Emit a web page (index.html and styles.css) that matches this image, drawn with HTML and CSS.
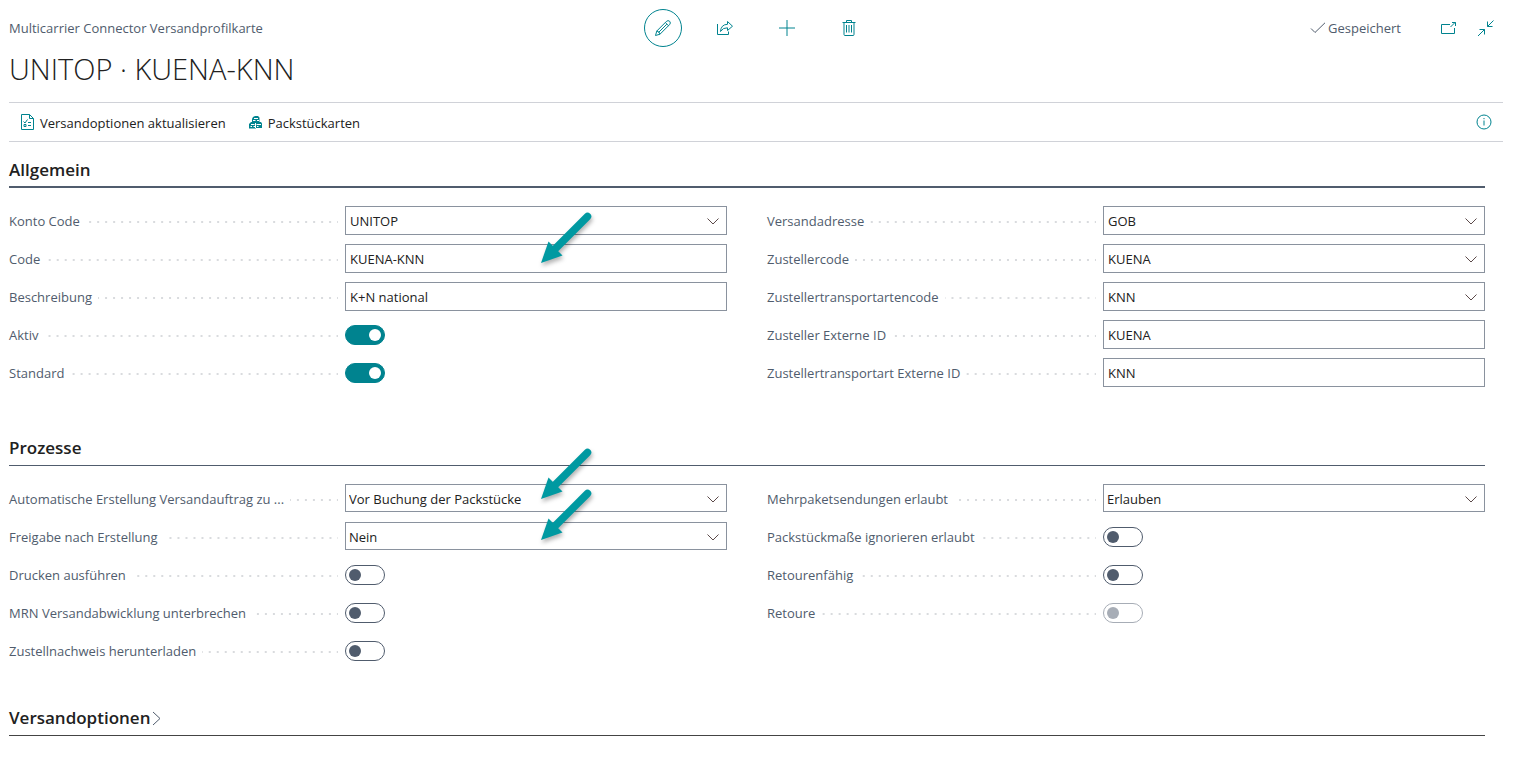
FILE: index.html
```html
<!DOCTYPE html>
<html lang="de">
<head>
<meta charset="utf-8">
<title>Multicarrier Connector Versandprofilkarte</title>
<link rel="stylesheet" href="styles.css">
</head>
<body>
<svg class="sprite" aria-hidden="true">
  <symbol id="chevron" viewBox="0 0 12 7"><path d="M.5 .5 6 6 11.500 .5" fill="none" stroke="currentColor"/></symbol>
  <symbol id="arrow" viewBox="0 0 60 60">
    <path d="M17 43 51.500 8.500" fill="none" stroke="currentColor" stroke-width="7.500" stroke-linecap="round"/>
    <path d="M5 55 12.500 33.500 26.500 47.500Z" fill="currentColor"/>
  </symbol>
</svg>
<div class="page">
  <header class="top">
    <p class="caption">Multicarrier Connector Versandprofilkarte</p>
    <div class="tools">
      <button class="tool tool-round" type="button" aria-label="Bearbeiten">
        <svg width="18" height="18" viewBox="0 0 18 18"><path d="M1.500 16.500 2.800 12 12.300 2.500Q14 .8 15.700 2.300 17.200 4 15.500 5.700L6 15.200ZM2.800 12Q5.500 12.500 6 15.200M11.300 3.500 14.500 6.700M4.500 13.500 12.800 5.200"/></svg>
      </button>
      <button class="tool" type="button" aria-label="Teilen">
        <svg width="18" height="16" viewBox="0 0 18 16"><path d="M1.500 4V14.500H12.500V11.500M4.500 11.500Q5 4.500 11.500 4.300V1.500L16.500 6.200 11.500 10.500V7.800Q7 7.500 4.500 11.500Z"/></svg>
      </button>
      <button class="tool" type="button" aria-label="Neu">
        <svg width="16" height="16" viewBox="0 0 16 16"><path d="M8 0V16M0 8H16"/></svg>
      </button>
      <button class="tool" type="button" aria-label="Löschen">
        <svg width="14" height="18" viewBox="0 0 14 18"><path d="M.5 3.500H13.500M4.500 3.500V1.500H9.500V3.500M2 3.500V15.500Q2 16.500 3 16.500H11Q12 16.500 12 15.500V3.500M4.500 6V13.500M7 6V13.500M9.500 6V13.500"/></svg>
      </button>
    </div>
    <div class="status">
      <svg class="check" width="16" height="12" viewBox="0 0 16 12"><path d="M1 6.500 5 10.500 15 .8"/></svg>
      <span class="saved">Gespeichert</span>
      <button class="mini" type="button" aria-label="In neuem Fenster öffnen">
        <svg width="17" height="14" viewBox="0 0 17 14"><path d="M10 3.500H1.500V12.500H14.500V7M10.500 6 15.500 1M12 1.500H15.500V5"/></svg>
      </button>
      <button class="mini" type="button" aria-label="Verkleinern">
        <svg width="18" height="18" viewBox="0 0 18 18"><path d="M16.500 1.500 10.500 7.500M10.500 2.500V7.500H15.500M1 17 7.500 10.500M2.500 10.500H7.500V15.500"/></svg>
      </button>
    </div>
  </header>
  <h1 class="title">UNITOP · KUENA-KNN</h1>
  <nav class="actions">
    <button class="action" type="button">
      <svg width="13" height="16" viewBox="0 0 13 16"><path d="M.5 .5H8.500L12.500 4.500V15.500H.5ZM8.500 .5V4.500H12.500M2.500 7.500 4 9 6.500 5.500M7 8.500H10M7 11.500H10M3 10.500H5V12.500H3Z"/></svg>
      Versandoptionen aktualisieren
    </button>
    <button class="action" type="button">
      <svg width="13" height="13" viewBox="0 0 13 13"><path class="solid" d="M4 1 6 0H9L10.500 1.500V6H12L13 7.500V12H7V12.500H0V8L2 6H3V3Z"/><path class="cut" d="M5 2.500H9M4 4.500H6.500M8 4.500H10M2 8.500H5.500M7.500 8.500H12M1.500 10.500H3M4.500 10.500H6M8 10.500H9.500M6.500 7V12"/></svg>
      Packstückarten
    </button>
    <button class="mini info" type="button" aria-label="Info">
      <svg width="16" height="16" viewBox="0 0 16 16"><circle cx="8" cy="8" r="7"/><path d="M8 6.500V11.500M8 4V5.200"/></svg>
    </button>
  </nav>

  <main class="content">
    <section>
      <h2 class="heading heading-strong">Allgemein</h2>
      <div class="columns">
        <div class="column">
          <div class="row"><label for="konto">Konto Code</label><div class="box"><input id="konto" type="text" value="UNITOP"><button class="lookup" type="button" aria-label="Konto auswählen"><svg><use href="#chevron"/></svg></button></div></div>
          <div class="row"><label for="code">Code</label><div class="box"><input id="code" type="text" value="KUENA-KNN"><svg class="pointer pointer-code"><use href="#arrow"/></svg></div></div>
          <div class="row"><label for="text">Beschreibung</label><div class="box"><input id="text" type="text" value="K+N national"></div></div>
          <div class="row"><label for="aktiv">Aktiv</label><input class="switch" id="aktiv" type="checkbox" role="switch" checked></div>
          <div class="row"><label for="standard">Standard</label><input class="switch" id="standard" type="checkbox" role="switch" checked></div>
        </div>
        <div class="column">
          <div class="row"><label for="adresse">Versandadresse</label><div class="box"><input id="adresse" type="text" value="GOB"><button class="lookup" type="button" aria-label="Adresse auswählen"><svg><use href="#chevron"/></svg></button></div></div>
          <div class="row"><label for="zusteller">Zustellercode</label><div class="box"><input id="zusteller" type="text" value="KUENA"><button class="lookup" type="button" aria-label="Zusteller auswählen"><svg><use href="#chevron"/></svg></button></div></div>
          <div class="row"><label for="art">Zustellertransportartencode</label><div class="box"><input id="art" type="text" value="KNN"><button class="lookup" type="button" aria-label="Transportart auswählen"><svg><use href="#chevron"/></svg></button></div></div>
          <div class="row"><label for="zusteller-id">Zusteller Externe ID</label><div class="box"><input id="zusteller-id" type="text" value="KUENA"></div></div>
          <div class="row"><label for="art-id">Zustellertransportart Externe ID</label><div class="box"><input id="art-id" type="text" value="KNN"></div></div>
        </div>
      </div>
    </section>

    <section>
      <h2 class="heading">Prozesse</h2>
      <div class="columns">
        <div class="column">
          <div class="row"><label for="auto">Automatische Erstellung Versandauftrag zu ...</label><div class="box box-select"><select id="auto"><option>Vor Buchung der Packstücke</option></select><svg class="caret"><use href="#chevron"/></svg><svg class="pointer pointer-auto"><use href="#arrow"/></svg></div></div>
          <div class="row"><label for="freigabe">Freigabe nach Erstellung</label><div class="box box-select"><select id="freigabe"><option>Nein</option></select><svg class="caret"><use href="#chevron"/></svg><svg class="pointer pointer-release"><use href="#arrow"/></svg></div></div>
          <div class="row"><label for="drucken">Drucken ausführen</label><input class="switch" id="drucken" type="checkbox" role="switch"></div>
          <div class="row"><label for="mrn">MRN Versandabwicklung unterbrechen</label><input class="switch" id="mrn" type="checkbox" role="switch"></div>
          <div class="row"><label for="nachweis">Zustellnachweis herunterladen</label><input class="switch" id="nachweis" type="checkbox" role="switch"></div>
        </div>
        <div class="column">
          <div class="row"><label for="mehr">Mehrpaketsendungen erlaubt</label><div class="box box-select"><select id="mehr"><option>Erlauben</option></select><svg class="caret"><use href="#chevron"/></svg></div></div>
          <div class="row"><label for="masse">Packstückmaße ignorieren erlaubt</label><input class="switch" id="masse" type="checkbox" role="switch"></div>
          <div class="row"><label for="retfaehig">Retourenfähig</label><input class="switch" id="retfaehig" type="checkbox" role="switch"></div>
          <div class="row"><label for="retoure">Retoure</label><input class="switch" id="retoure" type="checkbox" role="switch" disabled></div>
        </div>
      </div>
    </section>

    <section>
      <h2 class="heading heading-closed"><button type="button" aria-expanded="false">Versandoptionen<svg width="9" height="15" viewBox="0 0 9 15"><path d="M1 1 8 7.500 1 14"/></svg></button></h2>
    </section>
  </main>
</div>
</body>
</html>
```
FILE: styles.css
```css
:root {
  --teal: #00838f;
  --slate: #505c6d;
  --ink: #212121;
  --rule: #d0d2d8;
  --edge: #8a929e;
}

* { box-sizing: border-box; }

body {
  margin: 0;
  background: #fff;
  color: var(--ink);
  font: 13px/20px "Segoe UI", "Open Sans", "Noto Sans", sans-serif;
}

button, input, select { font: inherit; color: inherit; }

button {
  padding: 0;
  border: 0;
  background: none;
  cursor: pointer;
}

svg { display: block; flex: none; fill: none; stroke: currentColor; }

.sprite { position: absolute; width: 0; height: 0; }

.page { padding: 0 14px 24px 9px; }

.top {
  display: grid;
  grid-template-columns: 1fr auto 1fr;
  align-items: center;
  height: 56px;
}

.caption { margin: 0; color: var(--slate); }

.tools { display: flex; gap: 24px; color: var(--teal); }

.tool {
  display: grid;
  place-items: center;
  width: 38px;
  height: 38px;
  border-radius: 50%;
}

.tool-round { border: 1px solid var(--teal); }

.status {
  display: flex;
  justify-content: flex-end;
  align-items: center;
  color: var(--slate);
  padding-right: 8px;
}

.check { margin-right: 2px; }
.saved { margin-right: 19px; }

.mini { display: grid; place-items: center; color: var(--teal); }
.status .mini { margin-left: 20px; }

.title {
  margin: 0;
  padding-bottom: 20px;
  font-size: 29px;
  font-weight: 300;
  line-height: 26px;
}

.actions {
  display: flex;
  align-items: center;
  gap: 23px;
  height: 40px;
  padding: 2px 11px 0 12px;
  border-top: 1px solid var(--rule);
  border-bottom: 1px solid var(--rule);
}

.action { display: flex; align-items: center; gap: 6px; }
.action svg { color: var(--teal); margin-bottom: 2px; }
.action .solid { fill: currentColor; stroke: none; }
.action .cut { stroke: #fff; }
.info { margin-left: auto; padding-bottom: 2px; }

.content { padding-right: 18px; }

.heading {
  height: 46px;
  margin: 0;
  padding-top: 16px;
  border-bottom: 1px solid var(--slate);
  font-size: 17px;
  font-weight: 600;
  line-height: 24px;
}

.heading-strong { border-bottom-width: 2px; }
.heading-closed { border-bottom-color: #444; margin-top: -8px; }
.heading button { display: flex; align-items: center; gap: 2px; }
.heading svg { color: var(--slate); }

.columns {
  display: grid;
  grid-template-columns: 1fr 1fr;
  gap: 40px;
  padding: 14px 0 28px;
}

.row {
  display: grid;
  grid-template-columns: 336px 1fr;
  height: 38px;
  padding-top: 4px;
}

.row label {
  display: flex;
  align-items: center;
  gap: 6px;
  height: 30px;
  margin-right: 7px;
  color: var(--slate);
  white-space: nowrap;
}

.row label::after {
  content: "";
  flex: 1;
  height: 2px;
  margin-top: 2px;
  background: linear-gradient(to left, #d9dbde 2px, transparent 2px) right -1px top / 8px 2px repeat-x;
}

.box {
  position: relative;
  display: flex;
  height: 29px;
  border: 1px solid var(--edge);
}

.box-select { height: 28px; }

.box input, .box select {
  flex: 1;
  min-width: 0;
  padding: 0 4px;
  border: 0;
  outline: 0;
  background: none;
  appearance: none;
}

.box select { padding: 2px 3px 0; }

.lookup { display: grid; place-items: center; width: 27px; padding-top: 1px; }
.lookup svg, .caret { width: 12px; height: 7px; color: #5c4a4a; }
.caret { position: absolute; right: 7px; top: 11px; pointer-events: none; }

.pointer {
  position: absolute;
  left: 190px;
  width: 60px;
  height: 60px;
  stroke: none;
  color: #0099a1;
  filter: drop-shadow(1px 3px 2px rgb(0 0 0 / 30%));
  pointer-events: none;
  z-index: 1;
}

.pointer-code { top: -37px; }
.pointer-auto { top: -41px; }
.pointer-release { top: -38px; }

.switch {
  appearance: none;
  display: flex;
  align-items: center;
  width: 40px;
  height: 20px;
  margin: 5px 0 0;
  padding: 0 3px;
  border: 1px solid var(--slate);
  border-radius: 10px;
  color: var(--slate);
}

.switch::before {
  content: "";
  width: 12px;
  height: 12px;
  border-radius: 50%;
  background: currentColor;
}

.switch:checked {
  justify-content: flex-end;
  border-color: var(--teal);
  background: var(--teal);
  color: #fff;
}

.switch:disabled { border-color: #a7adb6; color: #a7adb6; }
```
